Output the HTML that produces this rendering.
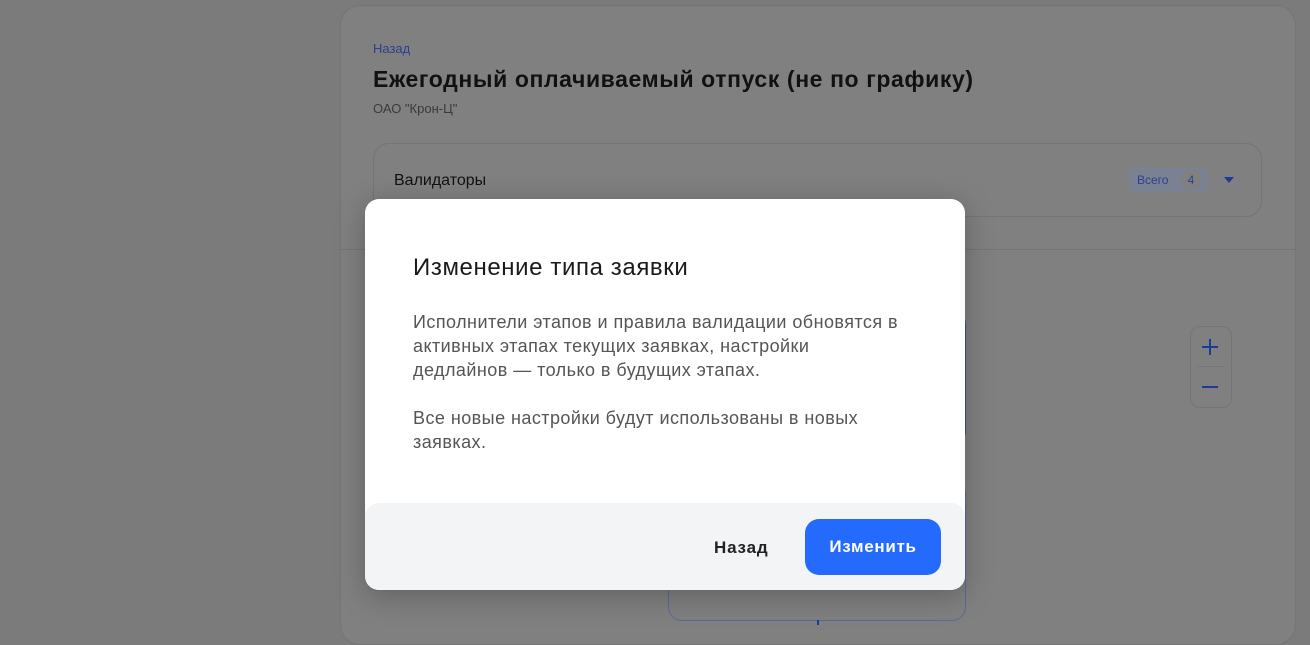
<!DOCTYPE html>
<html><head><meta charset="utf-8"><style>
*{box-sizing:border-box;margin:0;padding:0}
body{width:1310px;height:625px;overflow:hidden;background:#7b7b7b;font-family:"Liberation Sans","Noto Sans CJK JP",sans-serif;position:relative}
.card{position:absolute;left:340px;top:5px;width:956px;height:640px;background:#808080;border:1px solid #757575;border-radius:20px}
.abs{position:absolute}
.modal{position:absolute;left:365px;top:199px;width:600px;height:391px;background:#fff;border-radius:14px;overflow:hidden;box-shadow:0 6px 30px rgba(0,0,0,.25)}
.foot{position:absolute;left:0;top:304px;width:600px;height:87px;background:#f3f4f6;border-radius:14px 14px 0 0}
</style></head><body>
<div class="card"></div>
<div class="abs" style="left:373px;top:41px;font-size:13px;color:#2d3f8f">Назад</div>
<div class="abs" style="left:373px;top:66px;font-size:23px;color:#111;font-weight:bold;letter-spacing:0.6px">Ежегодный оплачиваемый отпуск (не по графику)</div>
<div class="abs" style="left:373px;top:101px;font-size:13px;color:#3a3a3a">ОАО "Крон-Ц"</div>
<div class="abs" style="left:373px;top:143px;width:889px;height:74px;border:1px solid #747474;border-radius:16px"></div>
<div class="abs" style="left:394px;top:172px;font-size:16px;color:#111">Валидаторы</div>
<div class="abs" style="left:1129px;top:168px;width:80px;height:24px;background:#7a8193;border-radius:8px"></div>
<div class="abs" style="left:1137px;top:173px;font-size:12px;color:#2d3f8f">Всего</div>
<div class="abs" style="left:1181px;top:170px;width:20px;height:20px;background:#808080;border-radius:8px;font-size:12px;color:#2d3f8f;text-align:center;line-height:20px">4</div>
<div class="abs" style="left:1224px;top:177px;width:0;height:0;border-left:5px solid transparent;border-right:5px solid transparent;border-top:6px solid #1c3a9a"></div>
<div class="abs" style="left:341px;top:249px;width:954px;height:1px;background:#747474"></div>
<div class="abs" style="left:668px;top:310px;width:298px;height:135px;border:1px solid #3a4f8f;border-radius:14px"></div>
<div class="abs" style="left:668px;top:480px;width:298px;height:141px;border:1px solid #5a6a9a;border-radius:14px"></div>
<div class="abs" style="left:817px;top:620px;width:2px;height:5px;background:#1c3a9a"></div>
<div class="abs" style="left:1190px;top:326px;width:42px;height:82px;border:1px solid #747474;border-radius:10px"></div>
<div class="abs" style="left:1197px;top:366px;width:28px;height:1px;background:#767676"></div>
<div class="abs" style="left:1202px;top:346px;width:16px;height:2px;background:#1c3a9a"></div>
<div class="abs" style="left:1209px;top:339px;width:2px;height:16px;background:#1c3a9a"></div>
<div class="abs" style="left:1202px;top:386px;width:16px;height:2px;background:#1c3a9a"></div>
<div class="modal">
<div class="abs" style="left:48px;top:55px;font-size:24px;color:#1a1a1a;letter-spacing:0.6px">Изменение типа заявки</div>
<div class="abs" style="left:48px;top:111px;width:540px;font-size:18px;line-height:24px;color:#555;letter-spacing:0.45px">Исполнители этапов и правила валидации обновятся в<br>активных этапах текущих заявках, настройки<br>дедлайнов — только в будущих этапах.<br><br>Все новые настройки будут использованы в новых<br>заявках.</div>
<div class="foot">
<div class="abs" style="left:349px;top:35px;font-size:17px;font-weight:bold;color:#222;letter-spacing:0.8px">Назад</div>
<div class="abs" style="left:440px;top:16px;width:136px;height:56px;background:#246bfd;border-radius:14px;color:#fff;font-size:17px;font-weight:bold;text-align:center;line-height:56px;letter-spacing:0.7px">Изменить</div>
</div>
</div>
</body></html>
